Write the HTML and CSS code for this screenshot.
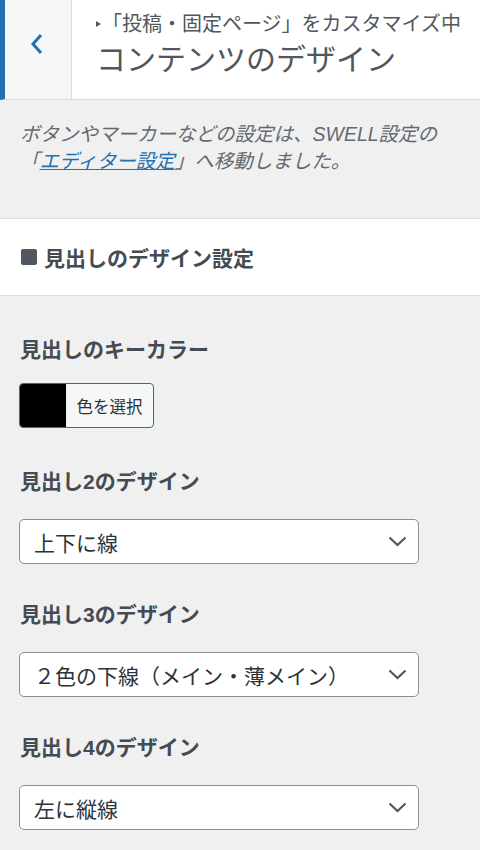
FILE: index.html
```html
<!DOCTYPE html>
<html lang="ja">
<head>
<meta charset="utf-8">
<title>コンテンツのデザイン</title>
<link rel="stylesheet" href="styles.css">
</head>
<body>
<div class="header">
  <div class="back">
    <svg width="14" height="22" viewBox="0 0 14 22"><path d="M11 2 L3 11 L11 20" fill="none" stroke="#2271b1" stroke-width="3"/></svg>
  </div>
  <div class="titles">
    <div class="sub"><span class="tri"></span>「投稿・固定ページ」をカスタマイズ中</div>
    <div class="title">コンテンツのデザイン</div>
  </div>
</div>
<div class="note">ボタンやマーカーなどの設定は、SWELL設定の<br>「<a href="#" class="link">エディター設定</a>」へ移動しました。</div>
<div class="section"><span class="sq"></span>見出しのデザイン設定</div>
<div class="content">
  <div class="control color-control">
    <div class="label">見出しのキーカラー</div>
    <div class="colorbtn"><span class="swatch"></span><span class="pick">色を選択</span></div>
  </div>
  <div class="control">
    <div class="label">見出し2のデザイン</div>
    <div class="select"><span>上下に線</span><svg width="19" height="11" viewBox="0 0 19 11"><path d="M1.5 1.5 L9.5 9 L17.5 1.5" fill="none" stroke="#50575e" stroke-width="2.2"/></svg></div>
  </div>
  <div class="control">
    <div class="label">見出し3のデザイン</div>
    <div class="select"><span>２色の下線（メイン・薄メイン）</span><svg width="19" height="11" viewBox="0 0 19 11"><path d="M1.5 1.5 L9.5 9 L17.5 1.5" fill="none" stroke="#50575e" stroke-width="2.2"/></svg></div>
  </div>
  <div class="control">
    <div class="label">見出し4のデザイン</div>
    <div class="select"><span>左に縦線</span><svg width="19" height="11" viewBox="0 0 19 11"><path d="M1.5 1.5 L9.5 9 L17.5 1.5" fill="none" stroke="#50575e" stroke-width="2.2"/></svg></div>
  </div>
</div>
</body>
</html>
```
FILE: styles.css
```css
html, body {
  margin: 0;
  padding: 0;
}
body {
  background: #f0f0f1;
  font-family: "Liberation Sans", "Noto Sans CJK JP", sans-serif;
  color: #50575e;
  width: 480px;
  height: 850px;
  overflow: hidden;
}
.header {
  display: flex;
  height: 99px;
  background: #fff;
  border-bottom: 1px solid #dcdcde;
  border-left: 5px solid #2271b1;
}
.back {
  width: 67px;
  background: #f6f7f7;
  border-right: 1px solid #dcdcde;
  display: flex;
  align-items: center;
  justify-content: center;
  padding-bottom: 12px;
  box-sizing: border-box;
}
.back svg {
  margin-left: -3px;
}
.titles {
  padding-left: 24px;
  padding-top: 11px;
}
.sub {
  font-size: 20px;
  line-height: 26px;
  color: #50575e;
  white-space: nowrap;
}
.tri {
  display: inline-block;
  width: 0;
  height: 0;
  border-top: 3px solid transparent;
  border-bottom: 3px solid transparent;
  border-left: 5px solid #50575e;
  vertical-align: middle;
  margin-right: 1px;
  position: relative;
  top: -2px;
}
.title {
  font-size: 30px;
  line-height: 36px;
  margin-top: 5px;
  color: #50575e;
  white-space: nowrap;
}
.note {
  padding: 21px 20px 50px 20px;
  font-size: 19.5px;
  line-height: 27px;
  font-style: italic;
  color: #646970;
  height: 118px;
  box-sizing: border-box;
}
.link {
  color: #2271b1;
  text-decoration: underline;
}
.section {
  background: #fff;
  border-top: 1px solid #dcdcde;
  border-bottom: 1px solid #dcdcde;
  height: 76px;
  display: flex;
  align-items: center;
  padding-left: 21px;
  font-size: 21px;
  font-weight: bold;
  color: #444b52;
}
.sq {
  display: inline-block;
  width: 16px;
  height: 16px;
  background: #50575e;
  border-radius: 2px;
  margin-right: 7px;
}
.content {
  padding: 39px 19px 0 19px;
}
.control {
  margin-bottom: 36px;
}
.color-control {
  margin-bottom: 39px;
}
.label {
  font-size: 21px;
  line-height: 30px;
  font-weight: bold;
  color: #444b52;
  padding-left: 1px;
  margin-bottom: 22px;
}
.color-control .label {
  margin-bottom: 18px;
}
.colorbtn {
  display: flex;
  width: 135px;
  height: 45px;
  box-sizing: border-box;
  border: 1.5px solid #2271b1;
  border-radius: 4px;
  overflow: hidden;
  background: #f6f7f7;
}
.swatch {
  width: 46px;
  background: #000;
}
.pick {
  flex: 1;
  display: flex;
  align-items: center;
  justify-content: center;
  font-size: 16.5px;
  color: #2c3338;
}
.select {
  width: 400px;
  height: 45px;
  box-sizing: border-box;
  border: 1px solid #8c8f94;
  border-radius: 5px;
  background: #fff;
  display: flex;
  align-items: center;
  justify-content: space-between;
  padding: 0 11px 0 14px;
  font-size: 21px;
  color: #2c3338;
  white-space: nowrap;
}
.select svg {
  display: block;
}
```
